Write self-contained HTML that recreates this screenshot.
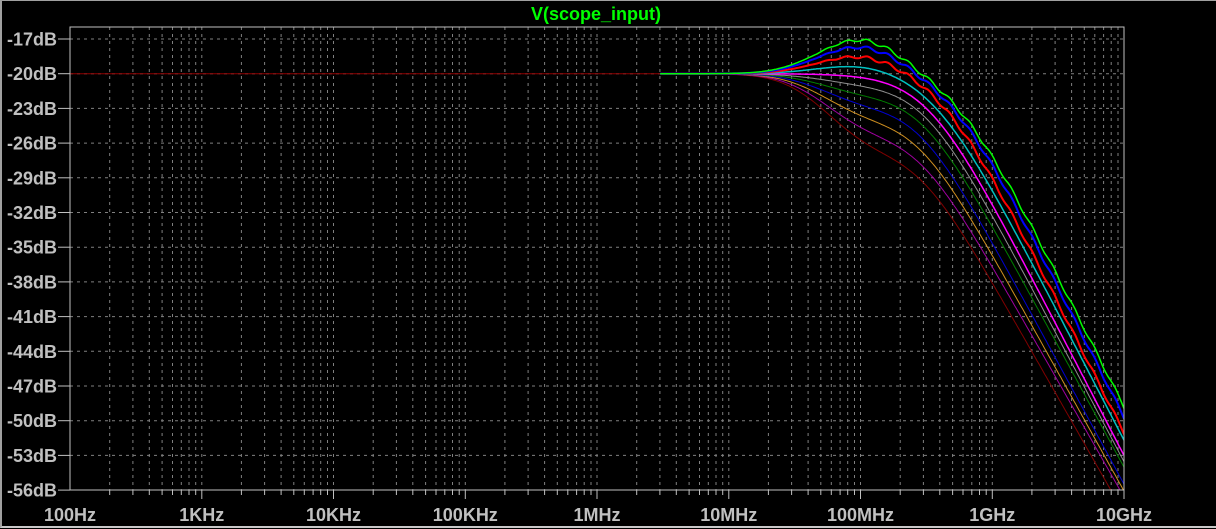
<!DOCTYPE html>
<html><head><meta charset="utf-8"><style>
html,body{margin:0;padding:0;background:#000;}
body{width:1216px;height:529px;overflow:hidden;position:relative;}
#f{position:absolute;left:0;top:0;width:1214px;height:525px;border-top:1px solid #a0a0a0;border-left:2px solid #a0a0a0;border-bottom:2px solid #c8c8c8;}
svg{position:absolute;left:0;top:0}
text{font-family:"Liberation Sans",Arial,sans-serif;font-weight:bold;font-size:18px;fill:#c0c0c0}
</style></head><body>
<div id="f"></div>
<svg id="s" width="1216" height="529" xmlns="http://www.w3.org/2000/svg"></svg>
<script>
var s=document.getElementById('s');
var L=70,R=1124,T=27,B=490,Y0=39,DY=34.7,DX=131.75;
var h='';
function X(lf){return L+(lf-2)*DX;}
function Yd(db){return Y0+(-17-db)/3*DY;}
for(var d=2;d<10;d++){for(var m=1;m<10;m++){var lf=d+Math.log10(m);var x=X(lf);if(x<=L+0.5)continue;
h+='<line x1="'+x.toFixed(1)+'" y1="'+T+'" x2="'+x.toFixed(1)+'" y2="'+B+'" stroke="#808080" stroke-dasharray="3,4"/>';
h+='<line x1="'+x.toFixed(1)+'" y1="'+B+'" x2="'+x.toFixed(1)+'" y2="'+(B+(m==1?9:5))+'" stroke="#c0c0c0"/>';}}
for(var i=0;i<14;i++){var db=-17-3*i;var y=Yd(db);
if(i<13)h+='<line x1="'+L+'" y1="'+y.toFixed(1)+'" x2="'+R+'" y2="'+y.toFixed(1)+'" stroke="#808080" stroke-dasharray="3,4"/>';
h+='<line x1="58" y1="'+y.toFixed(1)+'" x2="'+L+'" y2="'+y.toFixed(1)+'" stroke="#c0c0c0"/>';
h+='<text x="57" y="'+(y+6.5).toFixed(1)+'" text-anchor="end">'+db+'dB</text>';}
var xl=['100Hz','1KHz','10KHz','100KHz','1MHz','10MHz','100MHz','1GHz','10GHz'];
for(var i=0;i<9;i++)h+='<text x="'+X(2+i).toFixed(1)+'" y="521" text-anchor="middle">'+xl[i]+'</text>';
h+='<line x1="'+X(10)+'" y1="'+B+'" x2="'+X(10)+'" y2="'+(B+9)+'" stroke="#c0c0c0"/>';
h+='<line x1="'+L+'" y1="'+Yd(-20)+'" x2="660" y2="'+Yd(-20)+'" stroke="#900000"/>';
var cols=['#800000','#a000a0','#d09020','#0000d0','#008000','#909090','#ff00ff','#00c0c0','#ff0000','#0000ff','#00ff00'];
var fc=[8.1,8.17,8.24,8.31,8.38,8.44,8.5,8.56,8.62,8.68,8.72];
var nn=[2.0,2.0,2.05,2.1,2.1,2.15,2.2,2.2,2.25,2.25,2.25];
var bp=[-3.6,-3.0,-2.4,-1.8,-1.2,-0.6,0.0,0.8,1.6,2.4,3.0];
var sw=[1,1,1,1,1,1,1.5,1.5,2,2,1.5];
h+='<defs><clipPath id="c"><rect x="'+L+'" y="'+T+'" width="'+(R-L)+'" height="'+(B-T)+'"/></clipPath></defs><g clip-path="url(#c)">';
for(var k=0;k<11;k++){var p='';
for(var lf=6.48;lf<=10.001;lf+=0.01){
var r=Math.pow(10,(lf-fc[k])*nn[k]);
var db=-20-10*Math.log10(1+r)+bp[k]*Math.exp(-Math.pow((lf-8.0)/0.45,2));
if(k>=8)db+=0.15*Math.sin(lf*40)*Math.min(1,Math.max(0,(lf-7.6)*2));
p+=(p?'L':'M')+X(lf).toFixed(1)+' '+Yd(db).toFixed(1);}
h+='<path d="'+p+'" fill="none" stroke="'+cols[k]+'" stroke-width="'+sw[k]+'"/>';}
h+='</g>';
h+='<rect x="'+L+'" y="'+T+'" width="'+(R-L)+'" height="'+(B-T)+'" fill="none" stroke="#c0c0c0"/>';
h+='<text x="596" y="20" text-anchor="middle" style="fill:#00ff00">V(scope_input)</text>';
s.innerHTML=h;
</script>
</body></html>
